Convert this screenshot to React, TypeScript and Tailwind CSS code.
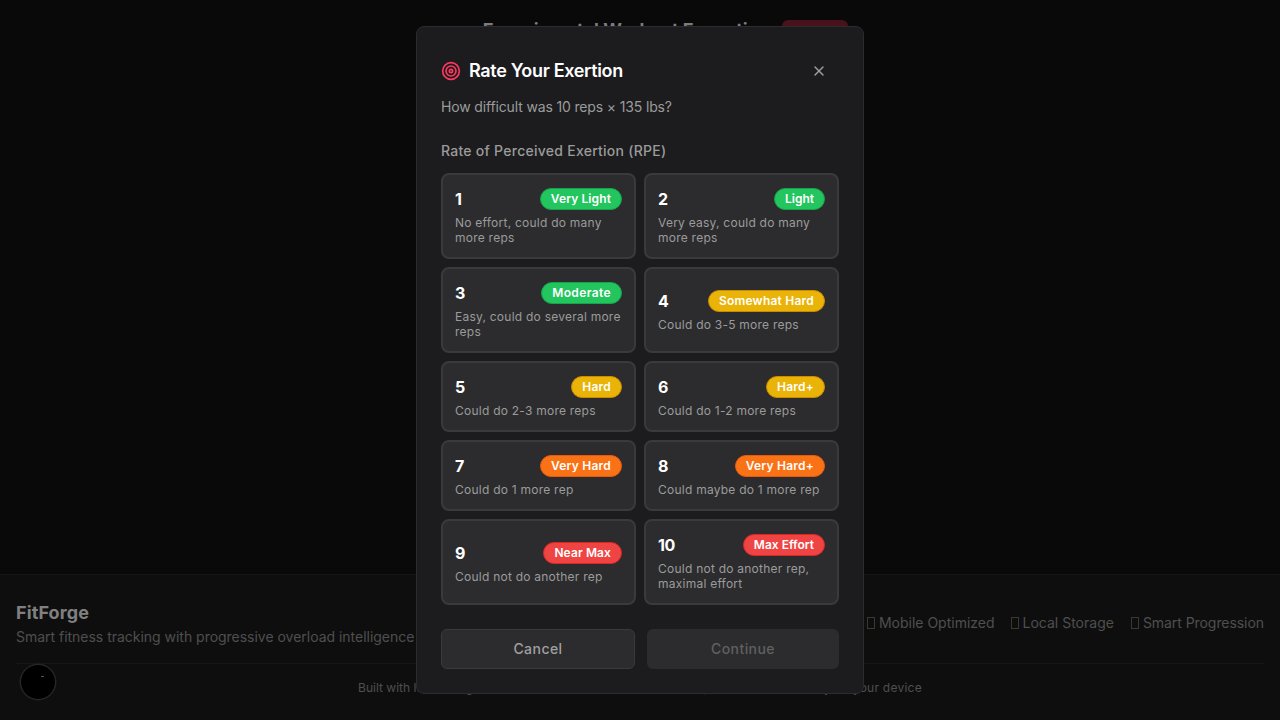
import { Target, X } from "lucide-react";

type Level = { value: number; label: string; tone: string; tracking: string; description: string };

const green = "bg-[#22c55e] border-[#16a34a]";
const yellow = "bg-[#eab308] border-[#ca8a04]";
const orange = "bg-[#f97316] border-[#ea580c]";
const red = "bg-[#ef4444] border-[#dc2626]";

const normal = "tracking-normal";
const slight = "tracking-[0.1px]";
const loose = "tracking-[0.22px]";
const wide = "tracking-[0.38px]";

const levels: Level[] = [
  { value: 1, label: "Very Light", tone: green, tracking: slight, description: "No effort, could do many more reps" },
  { value: 2, label: "Light", tone: green, tracking: normal, description: "Very easy, could do many more reps" },
  { value: 3, label: "Moderate", tone: green, tracking: wide, description: "Easy, could do several more reps" },
  { value: 4, label: "Somewhat Hard", tone: yellow, tracking: loose, description: "Could do 3-5 more reps" },
  { value: 5, label: "Hard", tone: yellow, tracking: loose, description: "Could do 2-3 more reps" },
  { value: 6, label: "Hard+", tone: yellow, tracking: loose, description: "Could do 1-2 more reps" },
  { value: 7, label: "Very Hard", tone: orange, tracking: loose, description: "Could do 1 more rep" },
  { value: 8, label: "Very Hard+", tone: orange, tracking: loose, description: "Could maybe do 1 more rep" },
  { value: 9, label: "Near Max", tone: red, tracking: slight, description: "Could not do another rep" },
  { value: 10, label: "Max Effort", tone: red, tracking: normal, description: "Could not do another rep, maximal effort" },
];

function LevelCard({ level }: { level: Level }) {
  return (
    <button className="flex flex-col justify-center rounded-lg border-2 border-[#3a3a3c] bg-[#2c2c2e] p-3 text-left">
      <span className="mb-1 flex w-full items-center justify-between">
        <span className="text-base font-bold tracking-[-0.4px] text-white">{level.value}</span>
        <span
          className={`rounded-full border px-2.5 py-0.5 text-xs font-semibold text-white ${level.tone} ${level.tracking}`}
        >
          {level.label}
        </span>
      </span>
      <span className="text-xs leading-[15px] tracking-[0.24px] text-[#9b9b9b]">{level.description}</span>
    </button>
  );
}

function ExertionDialog() {
  return (
    <div className="w-[448px] rounded-lg border border-[#2c2c2e] bg-[#1c1c1e] p-6">
      <div className="flex h-10 items-center justify-between">
        <h2 className="flex items-center gap-2 text-lg font-semibold tracking-[-0.34px] text-white">
          <Target className="size-5 text-[#ff375f]" />
          Rate Your Exertion
        </h2>
        <button className="flex h-9 w-10 items-center justify-center text-[#a0a0a0]">
          <X className="size-4" />
        </button>
      </div>
      <p className="mt-1.5 text-sm tracking-[-0.15px] text-[#9b9b9b]">How difficult was 10 reps × 135 lbs?</p>
      <h3 className="mt-6 text-sm font-medium tracking-[0.26px] text-[#9b9b9b]">Rate of Perceived Exertion (RPE)</h3>
      <div className="mt-3 grid grid-cols-2 gap-2">
        {levels.map((level) => (
          <LevelCard key={level.value} level={level} />
        ))}
      </div>
      <div className="mt-6 flex gap-3">
        <button className="h-10 w-[194px] rounded-md border border-[#3a3a3c] bg-[#2c2c2e] text-sm font-medium tracking-[0.45px] text-[#a0a0a0]">
          Cancel
        </button>
        <button className="h-10 w-[192px] rounded-md bg-[#2c2c2e] text-sm font-medium tracking-[0.45px] text-[#606060]">
          Continue
        </button>
      </div>
    </div>
  );
}

export default function App() {
  return (
    <div className="relative flex h-[720px] flex-col overflow-hidden bg-[#090909] font-['Inter',sans-serif]">
      <header className="flex h-[574px] items-start justify-end pr-[432px] pt-5">
        <h1 className="mr-3 -mt-0.5 text-lg leading-6 font-bold text-[#7c7c7c]">Experimental Workout Execution</h1>
        <div className="h-9 w-[66px] rounded-md bg-[#48111c]" />
      </header>
      <footer className="h-[146px] border-t border-[#161617] bg-[#0e0e0e] px-4 pt-6">
        <div className="flex h-16 items-start justify-between">
          <div>
            <div className="text-lg font-bold tracking-[0.1px] text-[#808080]">FitForge</div>
            <div className="text-sm tracking-[-0.02px] text-[#4f4f4f]">
              Smart fitness tracking with progressive overload intelligence
            </div>
          </div>
          <div className="mt-3.5 flex gap-4 text-sm text-[#4f4f4f]">
            {["Mobile Optimized", "Local Storage", "Smart Progression"].map((item) => (
              <span key={item} className="flex items-center gap-1 last:ml-px last:tracking-[-0.06px]">
                <span className="h-3 w-2 border border-[#3d382c]" />
                {item}
              </span>
            ))}
          </div>
        </div>
        <div className="border-t border-[#161617] pt-4 text-center text-xs tracking-[0.24px] text-[#4f4f4f]">
          <span className="tracking-normal">Built with </span>
          love using React and modern web tools • Data is private, stored locally on your device
        </div>
      </footer>
      <div className="absolute top-[664px] left-5 size-9 rounded-full border border-[#2a2a2a] bg-black shadow-[0_0_0_0.5px_#222]">
        <div className="absolute top-[11px] left-[20px] h-px w-[3px] bg-[#555]" />
      </div>
      <div className="absolute inset-0 flex items-center justify-center">
        <ExertionDialog />
      </div>
    </div>
  );
}
